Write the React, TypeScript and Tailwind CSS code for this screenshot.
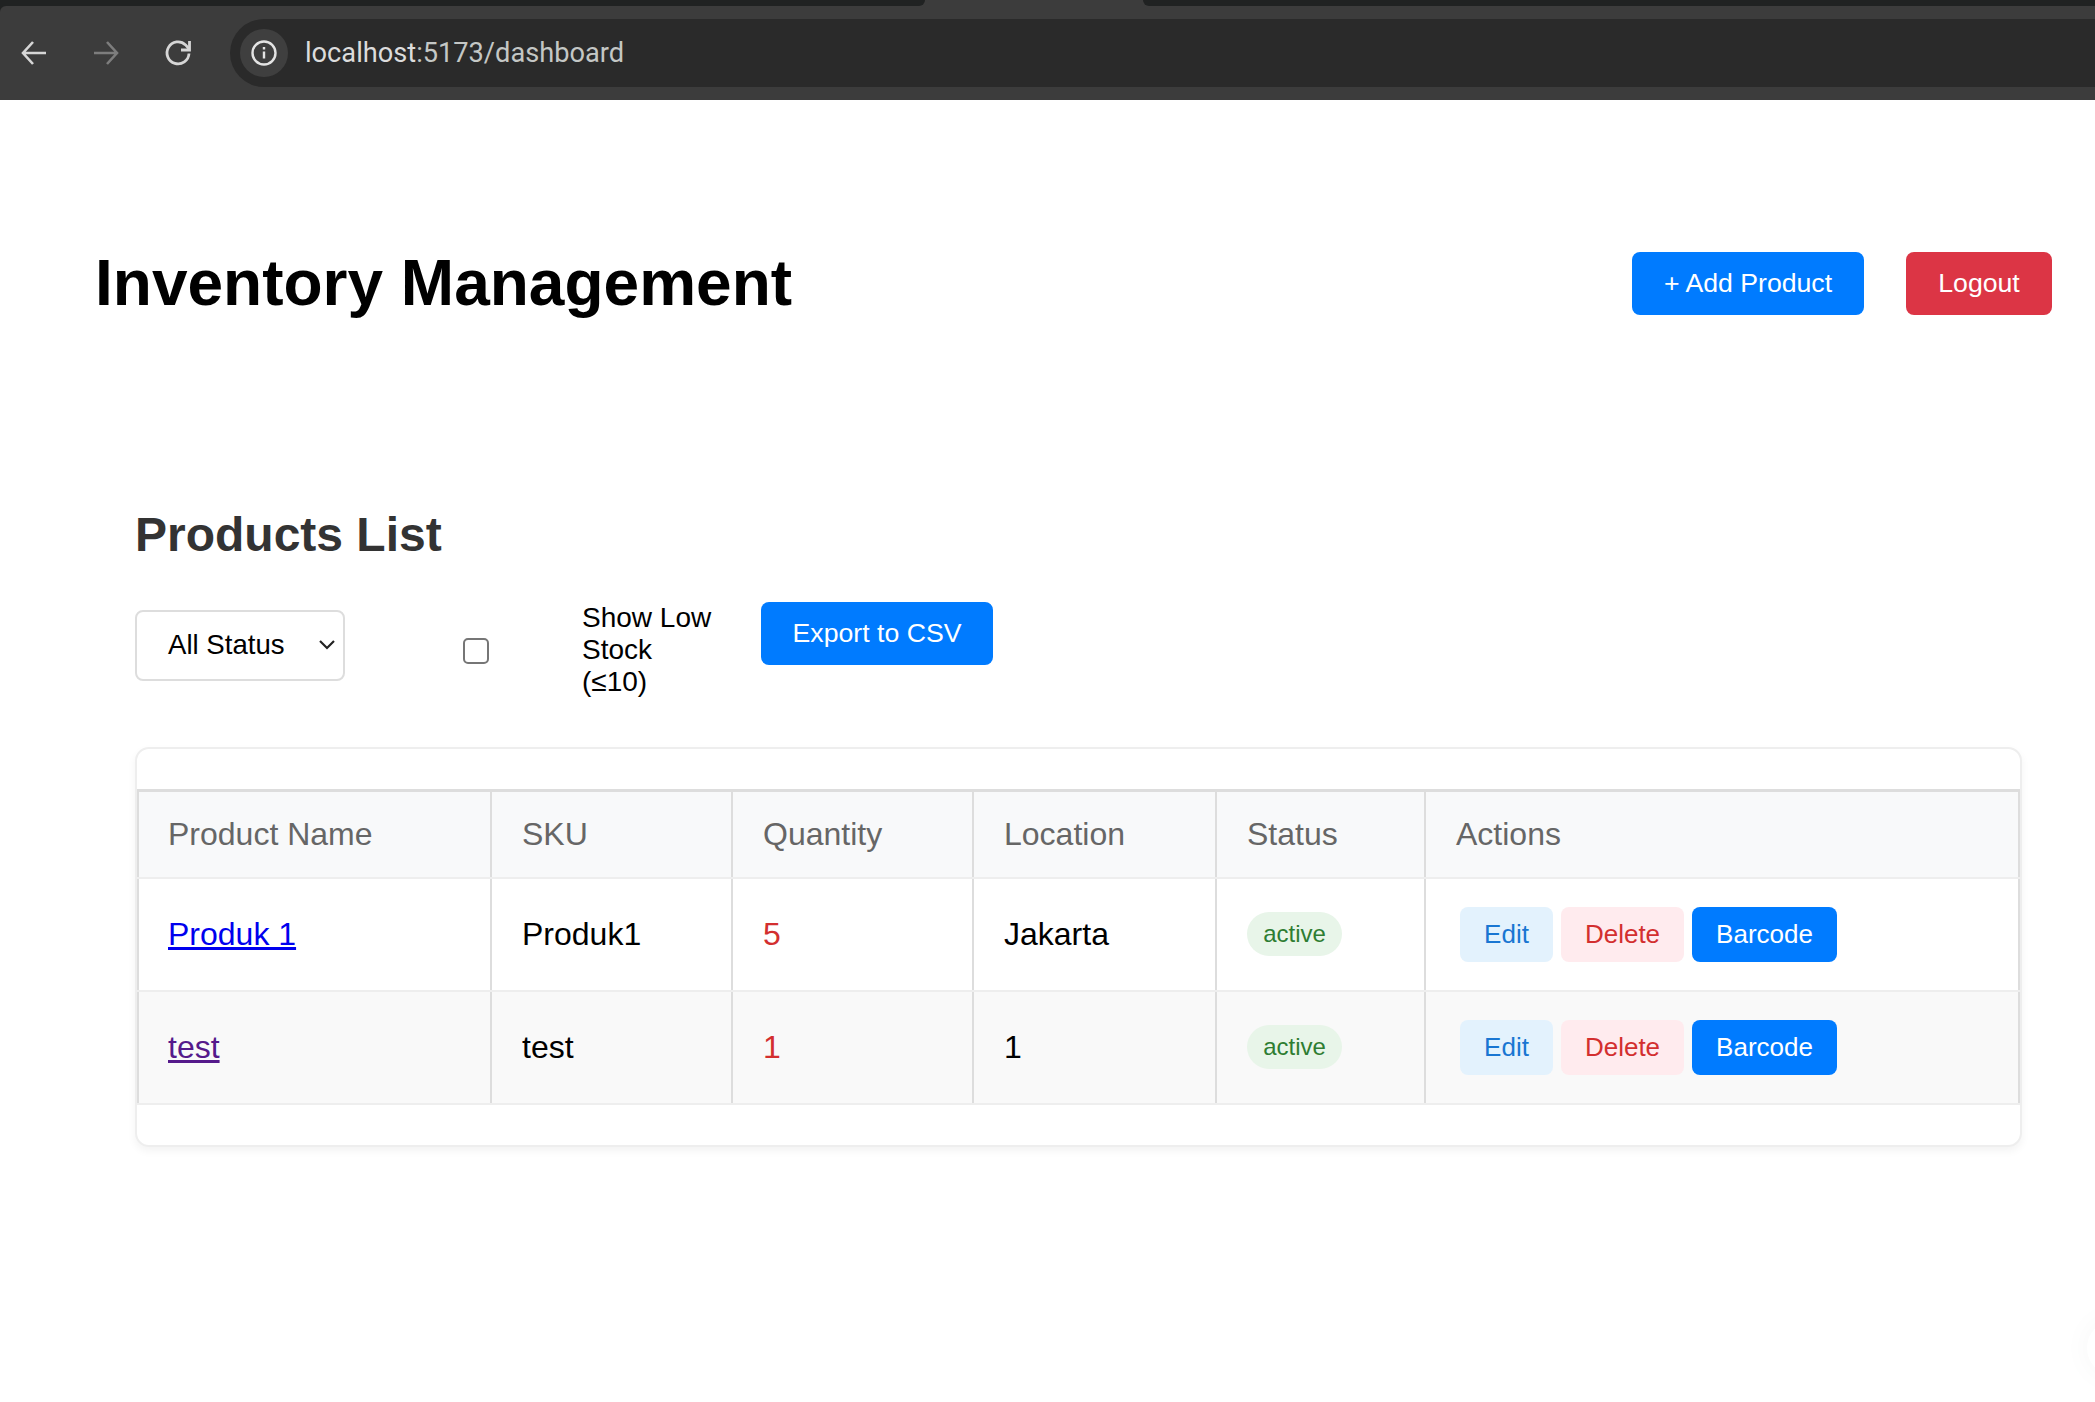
import React from 'react';

const products = [
  { id: 1, name: 'Produk 1', sku: 'Produk1', qty: 5, location: 'Jakarta', visited: false },
  { id: 2, name: 'test', sku: 'test', qty: 1, location: '1', visited: true },
];

const columns = ['Product Name', 'SKU', 'Quantity', 'Location', 'Status', 'Actions'];

const BrowserBar: React.FC = () => (
  <div className="bg-[#202222]">
    <div className="flex h-[6px] bg-[#3c3c3c]">
      <div className="w-[925px] rounded-br-[6px] bg-[#202222]" />
      <div className="w-[218px]" />
      <div className="flex-1 rounded-bl-[6px] bg-[#202222]" />
    </div>
    <div className="flex h-[94px] items-center rounded-tl-[6px] bg-[#3c3c3c] pl-[19px]">
      <svg width="30" height="30" viewBox="0 0 30 30" fill="none" stroke="#d6d6d6" strokeWidth="2.6">
        <path d="M27 15H4M14 4L4 15l10 11" />
      </svg>
      <svg className="ml-[42px]" width="30" height="30" viewBox="0 0 30 30" fill="none" stroke="#7d7d7d" strokeWidth="2.6">
        <path d="M3 15h23M16 4l10 11-10 11" />
      </svg>
      <svg className="ml-[42px]" width="30" height="30" viewBox="0 0 30 30" fill="none" stroke="#d6d6d6" strokeWidth="2.8">
        <path d="M26 15.5a11 11 0 1 1-3.4-8.6l3.4 4" />
        <path d="M26.5 3v9h-8.5" />
      </svg>
      <div className="ml-[37px] flex h-[68px] flex-1 items-center rounded-l-[34px] bg-[#2a2a2a] pl-[10px]">
        <div className="flex h-[48px] w-[48px] items-center justify-center rounded-full bg-[#3f3f3f]">
          <svg width="28" height="28" viewBox="0 0 28 28" fill="none" stroke="#e4e4e4" strokeWidth="2.4">
            <circle cx="14" cy="14" r="11.5" />
            <path d="M14 12.5v7M14 8v2.6" />
          </svg>
        </div>
        <span className="ml-[17px] font-['Roboto',sans-serif] text-[27.2px] text-[#dcdcdc]">
          localhost<span className="text-[#c4c7c5]">:5173/dashboard</span>
        </span>
      </div>
    </div>
  </div>
);

const App: React.FC = () => {
  return (
    <div className="relative h-[1402px] overflow-hidden bg-white font-['Liberation_Sans',Arial,sans-serif] text-black">
      <BrowserBar />

      <header className="flex h-[366px] items-center justify-between pl-[95px] pr-[43px]">
        <h1 className="text-[64px] font-bold leading-none">Inventory Management</h1>
        <div className="flex gap-[42px]">
          <button className="h-[63px] w-[232px] rounded-[8px] bg-[#007bff] text-[26.67px] text-white">+ Add Product</button>
          <button className="h-[63px] w-[146px] rounded-[8px] bg-[#dc3545] text-[26.67px] text-white">Logout</button>
        </div>
      </header>

      <main className="mt-[41px] pl-[135px] pr-[73px]">
        <h2 className="text-[48px] font-bold leading-[56px] text-[#333]">Products List</h2>

        <div className="mt-[39px] flex items-start">
          <div className="relative mt-[8px] h-[71px] w-[210px] rounded-[8px] border-2 border-[#ddd] pl-[31px] text-[27.6px] leading-[66px]">
            All Status
            <svg className="absolute right-[7px] top-[27px]" width="18" height="12" viewBox="0 0 18 12" fill="none" stroke="#222" strokeWidth="2.2">
              <path d="M2 2l7 7 7-7" />
            </svg>
          </div>
          <div className="ml-[118px] mt-[36px] h-[26px] w-[26px] rounded-[5px] border-2 border-[#767676] bg-white" />
          <div className="ml-[93px] w-[136px] text-[28px] leading-[32px]">Show Low Stock (≤10)</div>
          <button className="ml-[43px] h-[63px] w-[232px] rounded-[8px] bg-[#007bff] pb-[2px] text-[26.67px] text-white">Export to CSV</button>
        </div>

        <div className="mt-[49px] rounded-[14px] border-2 border-[#eee] bg-white py-[40px] shadow-[0_4px_8px_rgba(0,0,0,0.05)]">
          <table className="w-full table-fixed border-collapse text-[32px]">
            <colgroup>
              <col className="w-[353px]" />
              <col className="w-[241px]" />
              <col className="w-[241px]" />
              <col className="w-[243px]" />
              <col className="w-[209px]" />
              <col />
            </colgroup>
            <thead>
              <tr className="h-[87px] bg-[#f8f9fa]">
                {columns.map((col, i) => (
                  <th key={col} className={`border-x-2 border-t-[3px] border-b-2 border-x-[#ddd] border-t-[#ddd] border-b-[#eee] text-left font-normal text-[#666] ${i === 0 ? 'pl-[29px]' : 'pl-[30px]'}`}>
                    {col}
                  </th>
                ))}
              </tr>
            </thead>
            <tbody>
              {products.map(p => (
                <tr key={p.id} className={`h-[113px] ${p.id === 2 ? 'bg-[#f9f9f9]' : ''}`}>
                  <td className="border-x-2 border-y-2 border-x-[#ddd] border-y-[#eee] pl-[29px]">
                    <a href="#" className={`underline ${p.visited ? 'text-[#551a8b]' : 'text-[#0000ee]'}`}>{p.name}</a>
                  </td>
                  <td className="border-x-2 border-y-2 border-x-[#ddd] border-y-[#eee] pl-[30px]">{p.sku}</td>
                  <td className="border-x-2 border-y-2 border-x-[#ddd] border-y-[#eee] pl-[30px] text-[#d32f2f]">{p.qty}</td>
                  <td className="border-x-2 border-y-2 border-x-[#ddd] border-y-[#eee] pl-[30px]">{p.location}</td>
                  <td className="border-x-2 border-y-2 border-x-[#ddd] border-y-[#eee] pl-[30px]">
                    <div className="flex h-[44px] w-[95px] items-center justify-center rounded-full bg-[#e8f5e9] text-[24px] text-[#2e7d32]">active</div>
                  </td>
                  <td className="border-x-2 border-y-2 border-x-[#ddd] border-y-[#eee] pl-[34px]">
                    <div className="flex gap-[8px] text-[26px]">
                      <button className="h-[55px] w-[93px] rounded-[8px] bg-[#e3f2fd] text-[#1976d2]">Edit</button>
                      <button className="h-[55px] w-[123px] rounded-[8px] bg-[#ffebee] text-[#d32f2f]">Delete</button>
                      <button className="h-[55px] w-[145px] rounded-[8px] bg-[#007bff] text-white">Barcode</button>
                    </div>
                  </td>
                </tr>
              ))}
            </tbody>
          </table>
        </div>
      </main>

      <div className="absolute left-[2087px] top-[1320px] h-[56px] w-[56px] rounded-full bg-white shadow-[0_0_30px_rgba(0,0,0,0.04)]" />
    </div>
  );
};

export default App;
